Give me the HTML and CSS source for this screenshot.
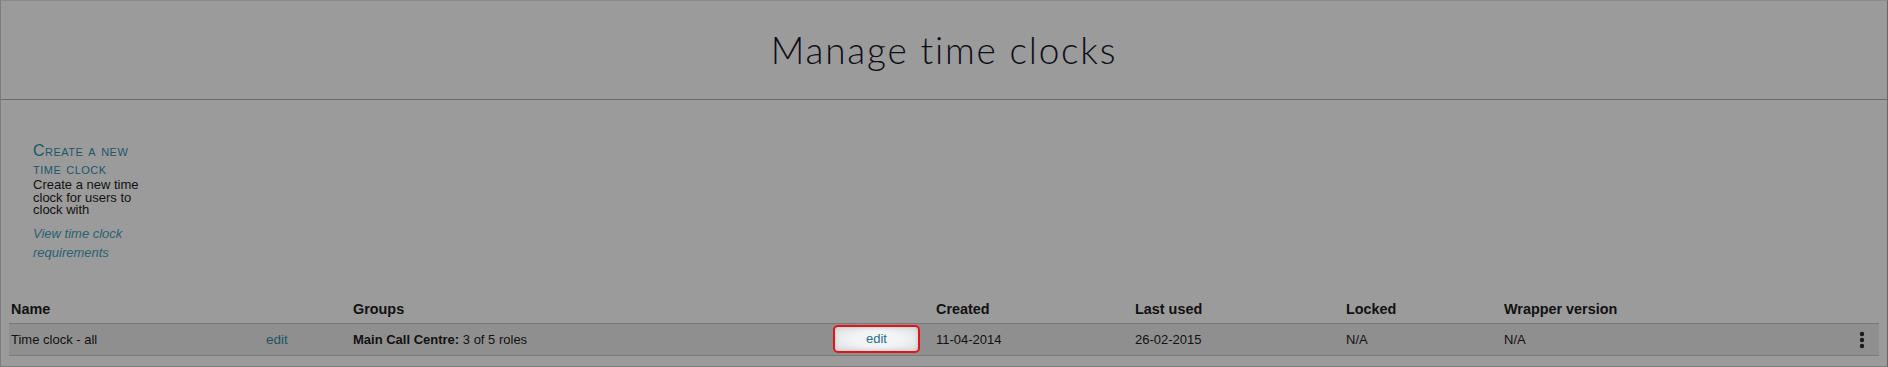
FILE: index.html
```html
<!DOCTYPE html>
<html lang="en">
<head>
    <meta charset="UTF-8">
    <title>Manage time clocks</title>
    <link rel="stylesheet" href="styles.css">
</head>
<body>
<div class="page">
    <div class="page-header">
        <h1>Manage time clocks</h1>
    </div>

    <div class="intro">
        <h2 class="intro-title">Create a new time clock</h2>
        <p class="intro-text">Create a new time clock for users to clock with</p>
        <a class="intro-link" href="#">View time clock requirements</a>
    </div>

    <table class="clocks">
        <colgroup>
            <col style="width: 255px">
            <col style="width: 87px">
            <col style="width: 481px">
            <col style="width: 102px">
            <col style="width: 199px">
            <col style="width: 211px">
            <col style="width: 158px">
            <col style="width: 343px">
            <col>
        </colgroup>
        <thead>
            <tr>
                <th>Name</th>
                <th></th>
                <th>Groups</th>
                <th></th>
                <th>Created</th>
                <th>Last used</th>
                <th>Locked</th>
                <th>Wrapper version</th>
                <th></th>
            </tr>
        </thead>
        <tbody>
            <tr>
                <td>Time clock - all</td>
                <td><a class="row-link" href="#">edit</a></td>
                <td><b>Main Call Centre:</b> 3 of 5 roles</td>
                <td class="btn-cell"><a class="edit-btn" href="#">edit</a></td>
                <td>11-04-2014</td>
                <td>26-02-2015</td>
                <td>N/A</td>
                <td>N/A</td>
                <td class="menu-cell">
                    <svg width="6" height="18" viewBox="0 0 6 18">
                        <circle cx="3" cy="3" r="2.2" fill="#1c1c1c"/>
                        <circle cx="3" cy="9" r="2.2" fill="#1c1c1c"/>
                        <circle cx="3" cy="15" r="2.2" fill="#1c1c1c"/>
                    </svg>
                </td>
            </tr>
        </tbody>
    </table>
</div>
</body>
</html>
```

FILE: styles.css
```css
* { margin: 0; padding: 0; box-sizing: border-box; }
body {
    background: #9b9b9b;
    font-family: "Liberation Sans", Arial, sans-serif;
    color: #111;
}
.page {
    height: 100vh;
    border: 1px solid #7c7c7c;
    border-top-color: #8a8a8a;
    border-right-color: #666;
}
.page-header {
    height: 99px;
    border-bottom: 1px solid #6a6a6a;
    display: flex;
    align-items: center;
    justify-content: center;
}
.page-header h1 {
    font-family: Lato, "Open Sans", sans-serif;
    font-weight: 300;
    font-size: 37px;
    color: #0e0e18;
    letter-spacing: 1.8px;
    margin-top: -2px;
}
.intro {
    width: 150px;
    padding: 42px 0 0 32px;
}
.intro-title {
    font-size: 16px;
    font-weight: normal;
    font-variant: small-caps;
    letter-spacing: 0.5px;
    line-height: 17.5px;
    color: #1c5667;
}
.intro-text {
    width: 112px;
    font-size: 13px;
    line-height: 12.5px;
    margin-top: 2px;
}
.intro-link {
    display: block;
    width: 112px;
    margin-top: 7.5px;
    font-size: 13px;
    line-height: 19px;
    font-style: italic;
    color: #2a6172;
    text-decoration: none;
}
.clocks {
    margin: 33.5px 8px 0 8px;
    width: calc(100% - 16px);
    table-layout: fixed;
    border-collapse: collapse;
}
.clocks th {
    height: 28px;
    text-align: left;
    font-size: 14.4px;
    padding: 0 2px;
    vertical-align: middle;
}
.clocks td {
    height: 32px;
    font-size: 13px;
    padding: 0 2px;
    vertical-align: middle;
    background: #8f8f8f;
    border-top: 1px solid #777;
    border-bottom: 1px solid #7a7a7a;
}
.row-link {
    color: #1d5468;
    text-decoration: none;
    font-size: 13.5px;
}
.btn-cell { vertical-align: top !important; padding: 0 !important; }
.edit-btn {
    display: block;
    width: 87px;
    height: 28px;
    line-height: 24px;
    margin: 1px 0 0 1px;
    text-align: center;
    font-size: 13px;
    color: #2b6d8c;
    text-decoration: none;
    border: 2px solid #e3141c;
    border-radius: 5px;
    background: radial-gradient(ellipse at center, #f2f4f5 40%, #dadee0 100%);
    box-shadow: inset 0 0 4px rgba(0, 0, 0, 0.15);
}
.menu-cell { text-align: center; }
.menu-cell svg { display: block; margin: 1px auto 0 auto; }
```
